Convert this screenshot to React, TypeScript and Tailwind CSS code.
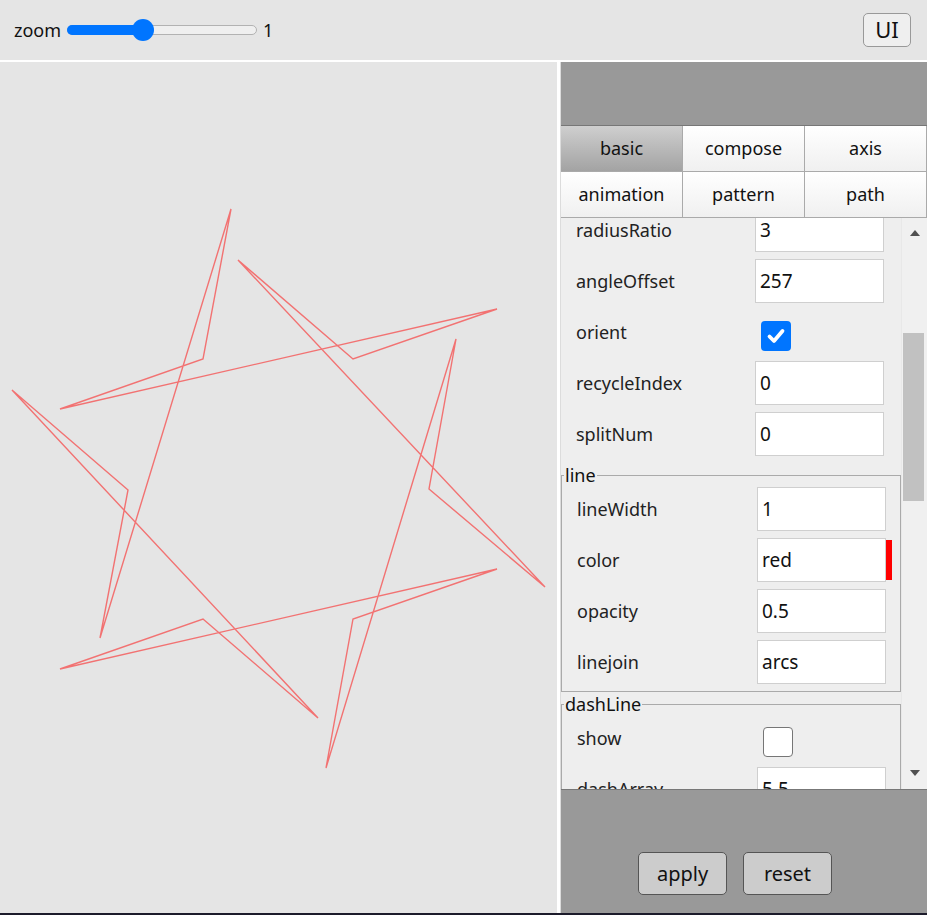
const font = { fontFamily: '"Noto Sans", "Open Sans", sans-serif' };

const starPoints =
  "231,209 203,359 60,409 497,309 353,359 238,260 545,587 429,489 456,339 326,768 353,619 497,569 60,669 203,619 318,718 12,390 128,490 100,638";

function ZoomSlider() {
  return (
    <div className="relative h-[22px] w-[190px]">
      <div className="absolute left-0 right-0 top-[6px] h-[10px] rounded-full border border-[#b2b2b2] bg-[#efefef]" />
      <div className="absolute left-0 top-[6px] h-[10px] w-[76px] rounded-full bg-[#0075ff]" />
      <div className="absolute left-[65px] top-0 h-[22px] w-[22px] rounded-full bg-[#0075ff]" />
    </div>
  );
}

function Field({ label, value, inset, swatch }: { label: string; value: string; inset?: boolean; swatch?: string }) {
  return (
    <div className="flex h-[44px] items-center">
      <div className={inset ? "w-[180px] text-[18px] text-[#222]" : "w-[179px] text-[18px] text-[#222]"}>{label}</div>
      <div className="flex h-[44px] w-[129px] items-center border border-[#cfcfcf] bg-white pl-[4px] text-[19px] text-[#111]">
        {value}
      </div>
      {swatch && <div className="h-[40px] w-[6px]" style={{ backgroundColor: swatch }} />}
    </div>
  );
}

function Check({ label, checked, inset }: { label: string; checked: boolean; inset?: boolean }) {
  return (
    <div className="flex h-[44px] items-center">
      <div className={inset ? "w-[186px] text-[18px] text-[#222]" : "w-[185px] text-[18px] text-[#222]"}>{label}</div>
      {checked ? (
        <div className="mt-[8px] flex h-[30px] w-[30px] items-center justify-center rounded-[4px] bg-[#0075ff]">
          <svg width="20" height="20" viewBox="0 0 20 20" fill="none">
            <path d="M3.5 10.5 L8 15 L16.5 5" stroke="white" strokeWidth="3.8" strokeLinecap="round" strokeLinejoin="round" />
          </svg>
        </div>
      ) : (
        <div className="mt-[8px] h-[30px] w-[30px] rounded-[4px] border border-[#767676] bg-white" />
      )}
    </div>
  );
}

function Tab({ label, active }: { label: string; active?: boolean }) {
  return (
    <div
      className={
        active
          ? "flex h-[46px] items-center justify-center border-b border-r border-[#aaa] bg-gradient-to-b from-[#cfcfcf] to-[#a3a3a3] text-[18px] text-[#111]"
          : "flex h-[46px] items-center justify-center border-b border-r border-[#aaa] bg-gradient-to-b from-white to-[#f0f0f0] text-[18px] text-[#111]"
      }
    >
      {label}
    </div>
  );
}

export default function App() {
  return (
    <div className="flex h-[915px] w-full flex-col bg-[#1c1b2b]" style={font}>
      <div className="flex h-[60px] items-center bg-[#e5e5e5] pl-[14px] pr-[16px]">
        <span className="text-[18px] text-[#111]">zoom</span>
        <div className="ml-[6px]">
          <ZoomSlider />
        </div>
        <span className="ml-[6px] text-[18px] text-[#111]">1</span>
        <button className="ml-auto mt-[-1px] flex h-[34px] w-[48px] items-center justify-center rounded-[5px] border border-[#999] bg-[#efefef] text-[22px] text-[#111]">
          UI
        </button>
      </div>
      <div className="h-[2px] bg-white" />

      <div className="flex h-[851px]">
        <div className="w-[557px] bg-[#e5e5e5]">
          <svg width="557" height="851" viewBox="0 62 557 851">
            <polygon points={starPoints} fill="none" stroke="#ff0000" strokeOpacity="0.5" strokeWidth="1.4" />
          </svg>
        </div>
        <div className="w-[3px] bg-white" />

        <div className="flex flex-1 flex-col border-l border-[#dcdcdc] bg-[#999]">
          <div className="h-[64px] border-b border-[#777]" />
          <div className="grid grid-cols-3">
            <Tab label="basic" active />
            <Tab label="compose" />
            <Tab label="axis" />
            <Tab label="animation" />
            <Tab label="pattern" />
            <Tab label="path" />
          </div>

          <div className="flex h-[571px] bg-[#eee]">
            <div className="w-[340px] overflow-hidden">
              <div className="mt-[-10px] flex flex-col gap-[7px] pl-[15px]">
                <Field label="radiusRatio" value="3" />
                <Field label="angleOffset" value="257" />
                <Check label="orient" checked />
                <Field label="recycleIndex" value="0" />
                <Field label="splitNum" value="0" />
              </div>
              <fieldset className="mt-[9px] border border-[#aaa] px-[2px] pb-[7px]">
                <legend className="px-[1px] text-[18px] leading-[20px] text-[#111]">line</legend>
                <div className="flex flex-col gap-[7px] pl-[13px] pt-[2px]">
                  <Field label="lineWidth" value="1" inset />
                  <Field label="color" value="red" inset swatch="#ff0000" />
                  <Field label="opacity" value="0.5" inset />
                  <Field label="linejoin" value="arcs" inset />
                </div>
              </fieldset>
              <fieldset className="mt-[2px] border border-[#aaa] px-[2px] pb-[7px]">
                <legend className="px-[1px] text-[18px] leading-[20px] text-[#111]">dashLine</legend>
                <div className="flex flex-col gap-[7px] pl-[13px] pt-[2px]">
                  <Check label="show" checked={false} inset />
                  <Field label="dashArray" value="5,5" inset />
                </div>
              </fieldset>
            </div>
            <div className="flex w-[26px] flex-col border-l border-[#e8e8e8] bg-[#f0f0f0]">
              <div className="flex h-[30px] items-center justify-center">
                <svg width="10" height="6" viewBox="0 0 10 6">
                  <polygon points="5,0 10,6 0,6" fill="#505050" />
                </svg>
              </div>
              <div className="ml-[1px] mt-[85px] h-[168px] w-[21px] bg-[#c1c1c1]" />
              <div className="flex-1" />
              <div className="flex h-[32px] items-center justify-center">
                <svg width="10" height="6" viewBox="0 0 10 6">
                  <polygon points="0,0 10,0 5,6" fill="#505050" />
                </svg>
              </div>
            </div>
          </div>

          <div className="flex flex-1 items-start gap-[16px] border-t border-[#777] pl-[77px] pt-[62px]">
            <button className="flex h-[43px] w-[89px] items-center justify-center rounded-[5px] border border-[#555] bg-[#ccc] text-[20px] text-[#111]">
              apply
            </button>
            <button className="flex h-[43px] w-[89px] items-center justify-center rounded-[5px] border border-[#555] bg-[#ccc] text-[20px] text-[#111]">
              reset
            </button>
          </div>
        </div>
      </div>
      <div className="h-[2px]" />
    </div>
  );
}
